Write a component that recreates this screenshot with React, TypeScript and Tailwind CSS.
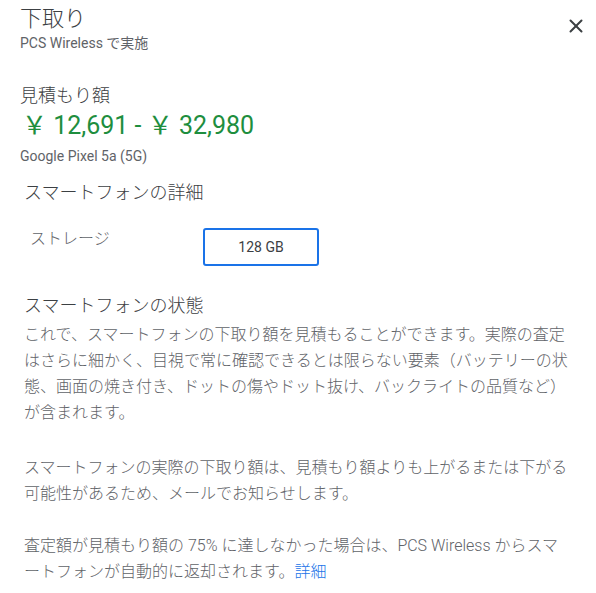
import { X } from 'lucide-react';

const font = { fontFamily: 'Roboto, "Noto Sans CJK JP", sans-serif' };

function App() {
  return (
    <div className="relative w-[596px] h-[593px] bg-white text-[#5f6368] overflow-hidden" style={font}>
      {/* Close */}
      <button className="absolute right-[8px] top-[14px] w-[24px] h-[24px] flex items-center justify-center text-[#3c4043]">
        <X size={22} strokeWidth={2.2} />
      </button>

      {/* Header */}
      <div className="pl-[20px] pt-[4px]">
        <h1 className="text-[22px] leading-[30px] text-[#3c4043] font-light">下取り</h1>
        <p className="text-[14px] leading-[18px] text-[#5f6368]">PCS Wireless で実施</p>
      </div>

      {/* Estimate */}
      <div className="pl-[20px] pt-[32px]">
        <h2 className="text-[18px] leading-[24px] text-[#3c4043] font-light">見積もり額</h2>
        <p className="text-[25px] leading-[34px] text-[#1e8e3e] pl-[2px] mt-[1px] whitespace-pre">
          ￥ 12,691 - ￥ 32,980
        </p>
        <p className="text-[14px] leading-[18px] text-[#5f6368] mt-[4px]">Google Pixel 5a (5G)</p>
      </div>

      {/* Details */}
      <div className="pl-[24px] pt-[15px]">
        <h2 className="text-[18px] leading-[26px] text-[#3c4043] font-light">スマートフォンの詳細</h2>
        <div className="flex items-start mt-[21px]">
          <span className="w-[179px] pl-[6px] text-[16px] leading-[24px] text-[#5f6368] font-light">ストレージ</span>
          <div className="mt-[1px] w-[116px] h-[38px] border-2 border-[#1a73e8] rounded-[3px] flex items-center justify-center text-[14px] text-[#3c4043]">
            128 GB
          </div>
        </div>
      </div>

      {/* Condition */}
      <div className="pl-[24px] pt-[27px]">
        <h2 className="text-[18px] leading-[26px] text-[#3c4043] font-light">スマートフォンの状態</h2>
        <div className="w-[548px] text-[16px] leading-[26px] text-[#5f6368] mt-[3px] font-light">
          <p>
            これで、スマートフォンの下取り額を見積もることができます。実際の査定はさらに細かく、目視で常に確認できるとは限らない要素（バッテリーの状態、画面の焼き付き、ドットの傷やドット抜け、バックライトの品質など）が含まれます。
          </p>
          <p className="mt-[29px]">
            スマートフォンの実際の下取り額は、見積もり額よりも上がるまたは下がる可能性があるため、メールでお知らせします。
          </p>
          <p className="mt-[26px]">
            査定額が見積もり額の 75% に達しなかった場合は、PCS Wireless からスマートフォンが自動的に返却されます。
            <a className="text-[#1a73e8]">詳細</a>
          </p>
        </div>
      </div>
    </div>
  );
}

export default App;
